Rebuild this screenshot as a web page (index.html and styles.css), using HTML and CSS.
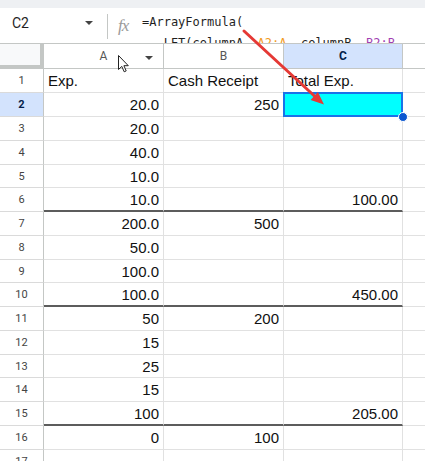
FILE: index.html
```html
<!DOCTYPE html>
<html>
<head>
<meta charset="utf-8">
<link rel="stylesheet" href="styles.css">
</head>
<body>
<div class="page">
  <div class="top-band"></div>
  <div class="fbar">
    <div class="namebox"><span class="nb-text">C2</span><span class="tri"></span></div>
    <div class="vsep"></div>
    <div class="fx">fx</div>
    <div class="formula"><div class="fl">=ArrayFormula(</div><div class="fl">   LET(columnA, <span class="o">A2:A</span>, columnB, <span class="p">B2:B</span></div></div>
  </div>
  <div class="grid">
    <div class="row hdr">
      <div class="c corner"></div>
      <div class="c ca hc hover">A<span class="htri"></span></div>
      <div class="c cb hc">B</div>
      <div class="c cc hc sel">C</div>
      <div class="c cd hc"></div>
    </div>
    <div class="row">
      <div class="c rh">1</div>
      <div class="c ca">Exp.</div>
      <div class="c cb">Cash Receipt</div>
      <div class="c cc">Total Exp.</div>
      <div class="c cd"></div>
    </div>
    <div class="row">
      <div class="c rh rsel">2</div>
      <div class="c ca num">20.0</div>
      <div class="c cb num">250</div>
      <div class="c cc active"><span class="handle"></span></div>
      <div class="c cd"></div>
    </div>
    <div class="row">
      <div class="c rh">3</div>
      <div class="c ca num">20.0</div>
      <div class="c cb num"></div>
      <div class="c cc num"></div>
      <div class="c cd"></div>
    </div>
    <div class="row">
      <div class="c rh">4</div>
      <div class="c ca num">40.0</div>
      <div class="c cb num"></div>
      <div class="c cc num"></div>
      <div class="c cd"></div>
    </div>
    <div class="row s">
      <div class="c rh">5</div>
      <div class="c ca num">10.0</div>
      <div class="c cb num"></div>
      <div class="c cc num"></div>
      <div class="c cd"></div>
    </div>
    <div class="row thick">
      <div class="c rh">6</div>
      <div class="c ca num">10.0</div>
      <div class="c cb num"></div>
      <div class="c cc num">100.00</div>
      <div class="c cd"></div>
    </div>
    <div class="row">
      <div class="c rh">7</div>
      <div class="c ca num">200.0</div>
      <div class="c cb num">500</div>
      <div class="c cc num"></div>
      <div class="c cd"></div>
    </div>
    <div class="row">
      <div class="c rh">8</div>
      <div class="c ca num">50.0</div>
      <div class="c cb num"></div>
      <div class="c cc num"></div>
      <div class="c cd"></div>
    </div>
    <div class="row s">
      <div class="c rh">9</div>
      <div class="c ca num">100.0</div>
      <div class="c cb num"></div>
      <div class="c cc num"></div>
      <div class="c cd"></div>
    </div>
    <div class="row thick">
      <div class="c rh">10</div>
      <div class="c ca num">100.0</div>
      <div class="c cb num"></div>
      <div class="c cc num">450.00</div>
      <div class="c cd"></div>
    </div>
    <div class="row">
      <div class="c rh">11</div>
      <div class="c ca num">50</div>
      <div class="c cb num">200</div>
      <div class="c cc num"></div>
      <div class="c cd"></div>
    </div>
    <div class="row">
      <div class="c rh">12</div>
      <div class="c ca num">15</div>
      <div class="c cb num"></div>
      <div class="c cc num"></div>
      <div class="c cd"></div>
    </div>
    <div class="row s">
      <div class="c rh">13</div>
      <div class="c ca num">25</div>
      <div class="c cb num"></div>
      <div class="c cc num"></div>
      <div class="c cd"></div>
    </div>
    <div class="row">
      <div class="c rh">14</div>
      <div class="c ca num">15</div>
      <div class="c cb num"></div>
      <div class="c cc num"></div>
      <div class="c cd"></div>
    </div>
    <div class="row thick">
      <div class="c rh">15</div>
      <div class="c ca num">100</div>
      <div class="c cb num"></div>
      <div class="c cc num">205.00</div>
      <div class="c cd"></div>
    </div>
    <div class="row">
      <div class="c rh">16</div>
      <div class="c ca num">0</div>
      <div class="c cb num">100</div>
      <div class="c cc num"></div>
      <div class="c cd"></div>
    </div>
    <div class="row">
      <div class="c rh">17</div>
      <div class="c ca num"></div>
      <div class="c cb num"></div>
      <div class="c cc num"></div>
      <div class="c cd"></div>
    </div>
  </div>
  <svg class="cursor" width="12" height="18" viewBox="0 0 12 18">
    <path d="M0.5 0.5 L0.5 14.5 L3.8 11.4 L6.2 16.8 L8.2 15.9 L5.9 10.7 L10.3 10.7 Z" fill="#fff" stroke="#222" stroke-width="1" stroke-linejoin="round"/>
  </svg>
  <svg class="arrow" width="425" height="461" viewBox="0 0 425 461">
    <line x1="244" y1="31" x2="315" y2="96.5" stroke="#e53935" stroke-width="3" stroke-linecap="round"/>
    <polygon points="324,104.5 310.6,100 317.9,92" fill="#e53935"/>
  </svg>
</div>
</body>
</html>
```

FILE: styles.css
```css
html, body {
  margin: 0;
  padding: 0;
  background: #fff;
}
.page {
  position: relative;
  width: 425px;
  height: 461px;
  overflow: hidden;
  font-family: "Liberation Sans", Arial, sans-serif;
}
.top-band {
  height: 8px;
  background: #eef0f3;
}
.fbar {
  display: flex;
  align-items: flex-start;
  height: 35px;
  border-bottom: 1px solid #c4c7c5;
  overflow: hidden;
  background: #fff;
}
.namebox {
  width: 107px;
  flex: none;
  display: flex;
  align-items: center;
  box-sizing: border-box;
  padding: 0 14px 0 12px;
  height: 30px;
}
.nb-text {
  font: 14px Roboto, "Liberation Sans", sans-serif;
  color: #1f1f1f;
  flex: 1;
}
.tri {
  width: 0;
  height: 0;
  border-left: 4px solid transparent;
  border-right: 4px solid transparent;
  border-top: 4px solid #444;
}
.vsep {
  width: 1px;
  height: 25px;
  margin-top: 6px;
  background: #c4c7c5;
  flex: none;
}
.fx {
  flex: none;
  width: 24px;
  margin-left: 10px;
  margin-top: 8px;
  font: italic 17px "Liberation Serif", serif;
  color: #9a9a9a;
  letter-spacing: -1px;
}
.formula {
  flex: 1;
  min-width: 0;
  padding-top: 4px;
  font: 12px "DejaVu Sans Mono", "Liberation Mono", monospace;
  color: #1f1f1f;
}
.fl {
  height: 21px;
  line-height: 21px;
  white-space: pre;
}
.o { color: #f29b1d; }
.p { color: #a23fb2; }

.grid {
  display: flex;
  flex-direction: column;
}
.row {
  display: flex;
  height: 24px;
}
.row.s { height: 23px; }
.row.hdr { height: 25px; }
.c {
  box-sizing: border-box;
  border-right: 1px solid #e1e1e1;
  border-bottom: 1px solid #e1e1e1;
  font-size: 15px;
  color: #111;
  display: flex;
  align-items: center;
  padding: 0 4px 0 4px;
  white-space: nowrap;
  overflow: hidden;
  flex: none;
}
.num { justify-content: flex-end; }
.rh {
  width: 44px;
  justify-content: center;
  padding: 0;
  font: 11px Roboto, "Liberation Sans", sans-serif;
  color: #444;
  border-right-color: #c4c7c5;
  border-bottom-color: #dadada;
}
.rsel {
  background: #d3e3fd;
  color: #041e49;
  font-weight: bold;
}
.ca { width: 120px; }
.cb { width: 120px; }
.cc { width: 119px; }
.cd { flex: 1; border-right: none; }
.hdr .c {
  border-bottom-color: #c4c7c5;
  border-right-color: #c4c7c5;
}
.corner {
  width: 44px;
  background: #f8f9fa;
  border-right: 4px solid #c4c7c5 !important;
  border-bottom: 4px solid #c4c7c5 !important;
}
.hc {
  justify-content: center;
  font: 12px Roboto, "Liberation Sans", sans-serif;
  color: #575757;
  position: relative;
}
.hc.sel {
  background: #d3e3fd;
  color: #041e49;
  font-weight: bold;
}
.htri {
  position: absolute;
  right: 10px;
  top: 12px;
  width: 0;
  height: 0;
  border-left: 4px solid transparent;
  border-right: 4px solid transparent;
  border-top: 4px solid #444;
}
.row.thick .ca,
.row.thick .cb,
.row.thick .cc {
  border-bottom: 2px solid #5c5c5c;
}
.active {
  background: #00ffff;
  position: relative;
  overflow: visible;
  box-shadow: inset 0 0 0 2px #1a73e8;
  margin-left: -1px;
  width: 120px;
  margin-top: -1px;
  height: 25px;
  border: none;
  z-index: 2;
}
.handle {
  position: absolute;
  right: -5px;
  bottom: -5px;
  width: 8px;
  height: 8px;
  border-radius: 50%;
  background: #0b57d0;
  border: 1px solid #fff;
}
.cursor {
  position: absolute;
  left: 118px;
  top: 55px;
  z-index: 5;
}
.arrow {
  position: absolute;
  left: 0;
  top: 0;
  z-index: 6;
  pointer-events: none;
}
```
